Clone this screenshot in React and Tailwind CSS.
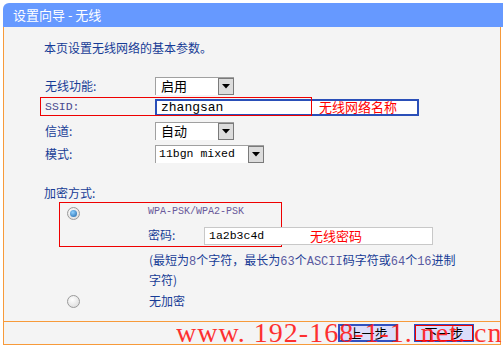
const cjk = { fontFamily: '"Noto Sans CJK SC", "Noto Sans", sans-serif' };
const mono = { fontFamily: '"Liberation Mono", "DejaVu Sans Mono", monospace' };

function Arrow() {
  return (
    <div className="w-[16px] h-[17px] border border-[#7a7a7a] bg-[#dcdcdc] flex items-center justify-center">
      <svg width="8" height="5" viewBox="0 0 8 5"><path d="M0 0 H8 L4 4.5 Z" fill="#000" /></svg>
    </div>
  );
}

function Radio({ on }) {
  return (
    <div className="w-[13px] h-[13px] rounded-full border border-[#9a9a9a] bg-[radial-gradient(circle_at_40%_35%,#ffffff,#d6d6d6)] flex items-center justify-center">
      {on && <div className="w-[7px] h-[7px] rounded-full bg-[radial-gradient(circle_at_40%_35%,#8fd0ff,#1a64a8)]" />}
    </div>
  );
}

export default function App() {
  return (
    <div className="w-[503px] h-[348px] bg-white relative overflow-hidden text-[12px] text-[#173c96]" style={cjk}>
      <div className="pt-[3px] pl-[3px]">
        <div className="h-[24px] w-[500px] bg-[#6699ff] rounded-tl-[6px] text-white text-[13px] leading-[24px] pl-[10px]">设置向导 - 无线</div>
        <div className="w-[498px] h-[294px] bg-[#f4f4f4] border-x border-[#f79a3a] pl-[40px] pt-[13px] flex flex-col">
          <div className="h-[16px] leading-[16px]">本页设置无线网络的基本参数。</div>

          <div className="mt-[20px] h-[20px] flex items-center">
            <div className="w-[111px] pl-[1px]">无线功能:</div>
            <div className="flex h-[18px] w-[79px] bg-white border-t border-l border-[#a0a0a0] items-start">
              <div className="flex-1 text-[13px] text-black leading-[16px] pl-[5px]">启用</div>
              <Arrow />
            </div>
          </div>

          <div className="h-[22px] flex items-center relative">
            <div className="w-[111px] pl-[1px] text-[11.5px] text-[#4a4a8e]" style={mono}>SSID:</div>
            <div className="w-[264px] h-[17px] bg-white border-2 border-[#2a4fb8] text-[13px] text-black leading-[13px] pl-[4px]" style={mono}>zhangsan</div>
            <div className="absolute left-[275px] top-[3px] text-[13px] text-[#ff0000] leading-[16px] whitespace-nowrap">无线网络名称</div>
            <div className="absolute left-[-4px] top-[1px] w-[272px] h-[19px] border border-[#ee0000]" />
          </div>

          <div className="mt-[3px] h-[20px] flex items-center">
            <div className="w-[111px] pl-[1px]">信道:</div>
            <div className="flex h-[18px] w-[79px] bg-white border-t border-l border-[#a0a0a0] items-start">
              <div className="flex-1 text-[13px] text-black leading-[16px] pl-[5px]">自动</div>
              <Arrow />
            </div>
          </div>

          <div className="mt-[3px] h-[20px] flex items-center">
            <div className="w-[111px] pl-[1px]">模式:</div>
            <div className="flex h-[18px] w-[109px] bg-white border-t border-l border-[#a0a0a0] items-start">
              <div className="flex-1 text-[11.5px] text-black leading-[16px] pl-[3px]" style={mono}>11bgn mixed</div>
              <Arrow />
            </div>
          </div>

          <div className="mt-[21px] h-[16px] leading-[16px]">加密方式:</div>

          <div className="mt-[1px] ml-[15px] w-[223px] h-[45px] relative">
            <div className="absolute inset-0 border border-[#ee0000]" />
            <div className="absolute left-[8px] top-[5px]"><Radio on /></div>
            <div className="absolute left-[89px] top-[3px] text-[10px] text-[#6a5a9a] leading-[14px] whitespace-nowrap" style={mono}>WPA-PSK/WPA2-PSK</div>
            <div className="absolute left-[89px] top-[25px] leading-[16px]">密码:</div>
            <div className="absolute left-[145px] top-[25px] w-[229px] h-[18px] bg-white border border-[#c8c8c8] text-[11.5px] text-black leading-[16px] pl-[4px]" style={mono}>1a2b3c4d</div>
            <div className="absolute left-[251px] top-[25px] text-[13px] text-[#ff0000] leading-[17px] whitespace-nowrap">无线密码</div>
          </div>

          <div className="mt-[4px] ml-[105px] leading-[18px] whitespace-nowrap">
            (最短为<span className="text-[#5a5aa0]" style={mono}>8</span>个字符，最长为<span className="text-[#5a5aa0]" style={mono}>63</span>个<span className="text-[#5a5aa0]" style={mono}>ASCII</span>码字符或<span className="text-[#5a5aa0]" style={mono}>64</span>个<span className="text-[#5a5aa0]" style={mono}>16</span>进制<br />字符)
          </div>

          <div className="mt-[4px] h-[16px] flex items-center">
            <div className="w-[105px] pl-[23px]"><Radio /></div>
            <div className="leading-[16px]">无加密</div>
          </div>
        </div>
        <div className="w-[498px] h-[24px] bg-[#f4f4f4] border border-[#f79a3a] flex items-center justify-end pr-[26px] gap-[16px]">
          <div className="w-[60px] h-[18px] bg-[#dcdcfa] border-2 border-[#3150c0] text-[13px] text-black leading-[14px] text-center">上一步</div>
          <div className="w-[60px] h-[18px] bg-[#dcdcfa] border-2 border-[#3150c0] text-[13px] text-black leading-[14px] text-center relative">
            下一步
            <div className="absolute inset-[-1px] border border-[#ee0000]" />
          </div>
        </div>
      </div>
      <div className="absolute left-[176px] top-[318px] text-[28px] leading-[30px] text-[#ff1a1a] opacity-90 whitespace-nowrap tracking-[1px]" style={{ fontFamily: '"Liberation Serif", serif' }}>www. 192-168-1-1. net. cn</div>
    </div>
  );
}
